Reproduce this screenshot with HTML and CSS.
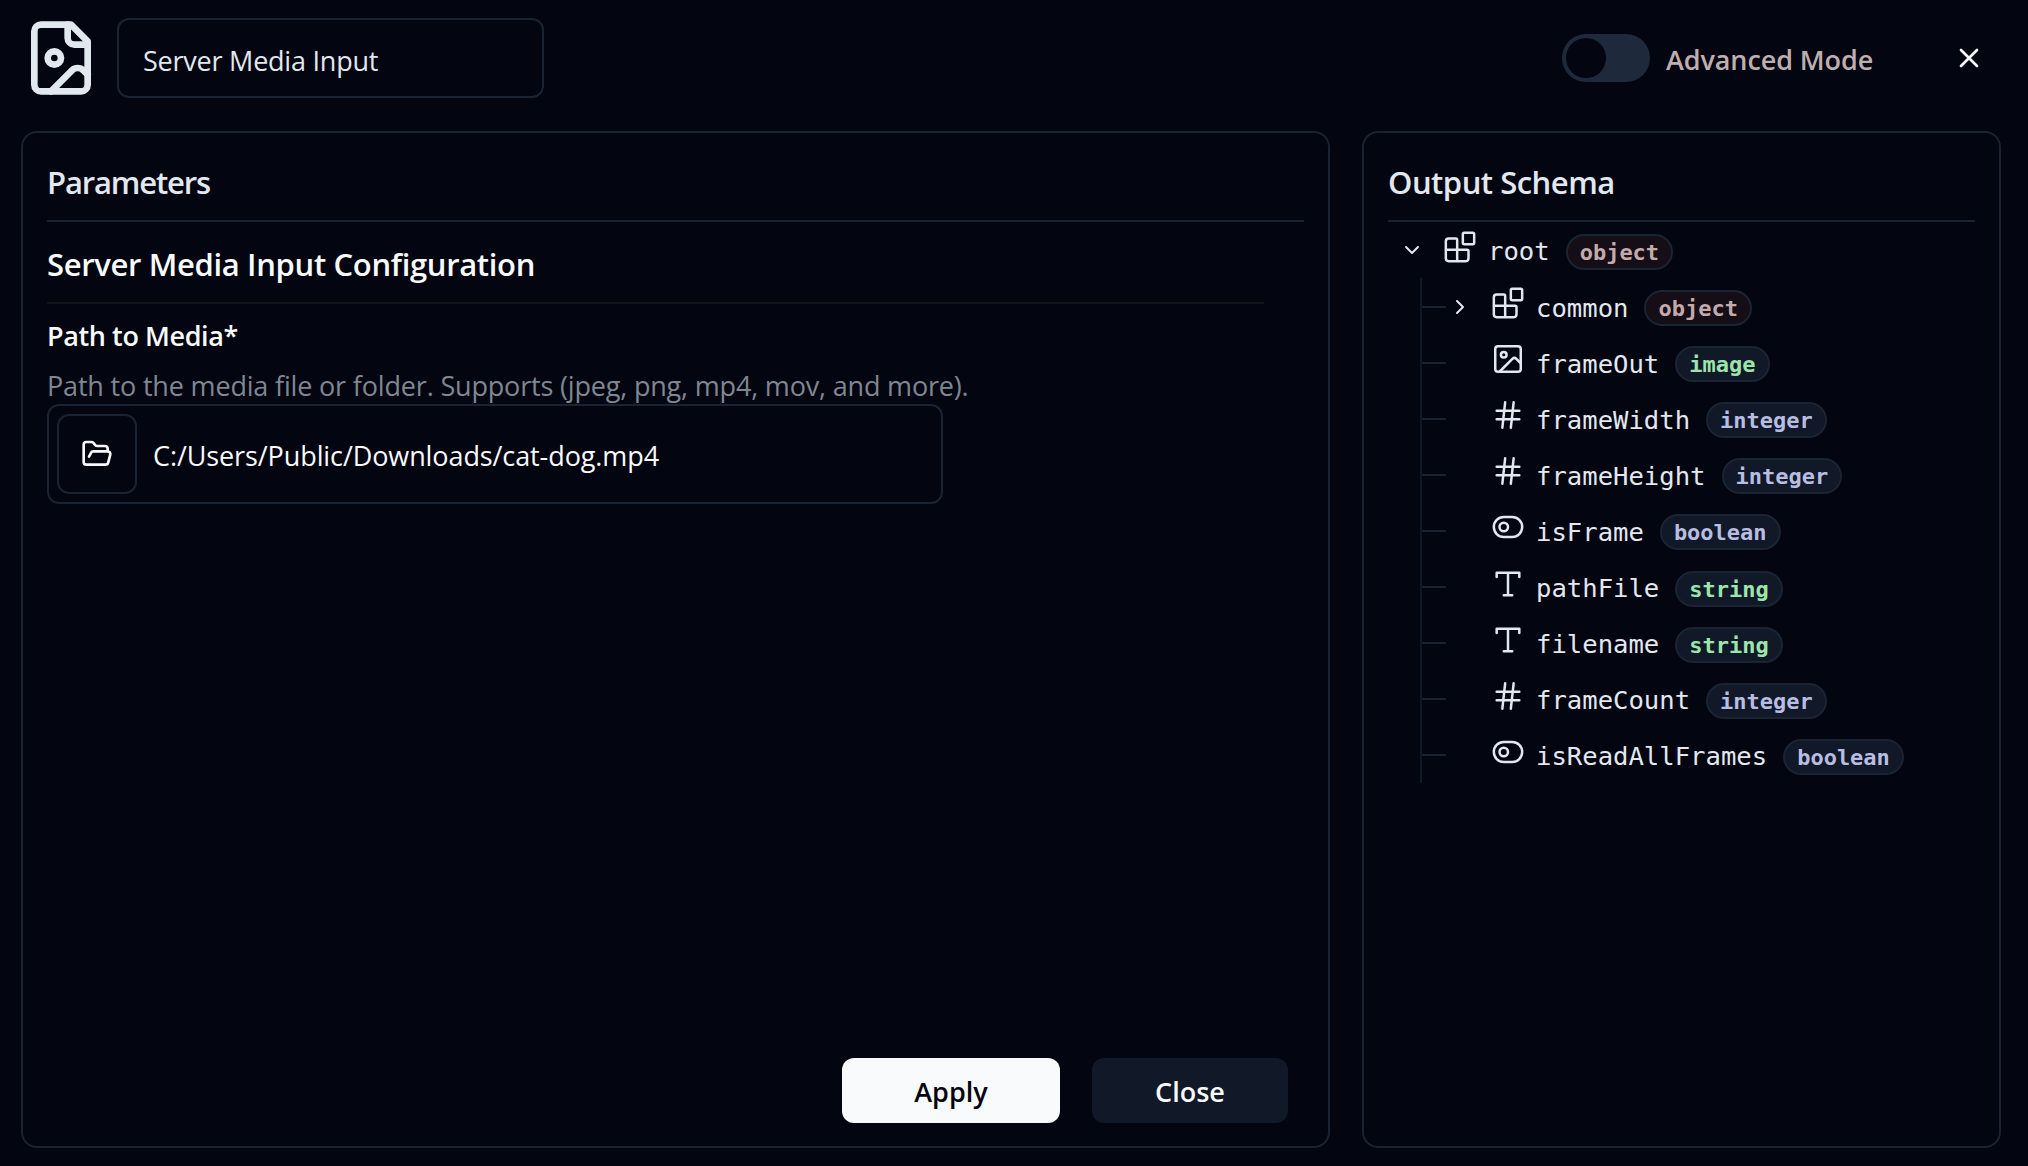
FILE: index.html
```html
<!DOCTYPE html>
<html lang="en">
<head>
  <meta charset="UTF-8" />
  <meta name="viewport" content="width=device-width, initial-scale=1.0"/>
  <title>Server Media Input</title>
  <link rel="stylesheet" href="styles.css">
</head>
<body>
  <!-- icon sprites -->
  <svg class="sprites">
    <symbol id="i-blocks" viewBox="0 0 24 24"><rect width="8" height="8" x="14" y="2" rx="1"/><path d="M10 22V7a1 1 0 0 0-1-1H4a2 2 0 0 0-2 2v12a2 2 0 0 0 2 2h12a2 2 0 0 0 2-2v-5a1 1 0 0 0-1-1H2"/></symbol>
    <symbol id="i-image" viewBox="0 0 24 24"><rect width="18" height="18" x="3" y="3" rx="2"/><circle cx="9" cy="9" r="2"/><path d="m21 15-3.086-3.086a2 2 0 0 0-2.828 0L6 21"/></symbol>
    <symbol id="i-hash" viewBox="0 0 24 24"><path d="M4 9h16M4 15h16M10 3 8 21M16 3l-2 18"/></symbol>
    <symbol id="i-toggle" viewBox="0 0 24 24"><rect width="20" height="14" x="2" y="5" rx="7"/><circle cx="9" cy="12" r="3"/></symbol>
    <symbol id="i-type" viewBox="0 0 24 24"><path d="M4 7V4h16v3M9 20h6M12 4v16"/></symbol>
  </svg>

  <div class="dialog">
    <header class="header">
      <svg class="node-icon" viewBox="0 0 24 24"><path d="M15 2H6a2 2 0 0 0-2 2v16a2 2 0 0 0 2 2h12a2 2 0 0 0 2-2V7Z"/><path d="M14 2v4a2 2 0 0 0 2 2h4"/><circle cx="10" cy="12" r="2"/><path d="m20 17-1.296-1.296a2.41 2.41 0 0 0-3.408 0L9 22"/></svg>
      <input class="name-input" type="text" value="Server Media Input" />
      <div class="mode">
        <button class="switch" role="switch" aria-checked="false"><span class="knob"></span></button>
        <span class="mode-label">Advanced Mode</span>
      </div>
      <button class="close-x" aria-label="Close">
        <svg viewBox="0 0 24 24"><path d="M18 6 6 18M6 6l12 12"/></svg>
      </button>
    </header>

    <main class="panels">
      <section class="panel params">
        <h2 class="panel-title">Parameters</h2>
        <div class="form">
          <h3 class="form-title">Server Media Input Configuration</h3>
          <label class="field-label">Path to Media*</label>
          <p class="field-help">Path to the media file or folder. Supports (jpeg, png, mp4, mov, and more).</p>
          <div class="path-field">
            <button class="browse" aria-label="Browse">
              <svg viewBox="0 0 24 24"><path d="m6 14 1.5-2.9A2 2 0 0 1 9.24 10H20a2 2 0 0 1 1.94 2.5l-1.54 6a2 2 0 0 1-1.95 1.5H4a2 2 0 0 1-2-2V5a2 2 0 0 1 2-2h3.9a2 2 0 0 1 1.69.9l.81 1.2a2 2 0 0 0 1.67.9H18a2 2 0 0 1 2 2v2"/></svg>
            </button>
            <span class="path-value">C:/Users/Public/Downloads/cat-dog.mp4</span>
          </div>
        </div>
        <div class="actions">
          <button class="btn btn-apply">Apply</button>
          <button class="btn btn-close">Close</button>
        </div>
      </section>

      <section class="panel schema">
        <h2 class="panel-title">Output Schema</h2>
        <div class="row root">
          <svg class="chevron" viewBox="0 0 24 24"><path d="m6 9 6 6 6-6"/></svg>
          <svg class="icon"><use href="#i-blocks"/></svg>
          <span class="key">root</span><span class="badge object">object</span>
        </div>
        <div class="children">
          <div class="row">
            <svg class="chevron" viewBox="0 0 24 24"><path d="m9 18 6-6-6-6"/></svg>
            <svg class="icon"><use href="#i-blocks"/></svg>
            <span class="key">common</span><span class="badge object">object</span>
          </div>
          <div class="row">
            <span class="chevron"></span>
            <svg class="icon"><use href="#i-image"/></svg>
            <span class="key">frameOut</span><span class="badge text">image</span>
          </div>
          <div class="row">
            <span class="chevron"></span>
            <svg class="icon"><use href="#i-hash"/></svg>
            <span class="key">frameWidth</span><span class="badge">integer</span>
          </div>
          <div class="row">
            <span class="chevron"></span>
            <svg class="icon"><use href="#i-hash"/></svg>
            <span class="key">frameHeight</span><span class="badge">integer</span>
          </div>
          <div class="row">
            <span class="chevron"></span>
            <svg class="icon"><use href="#i-toggle"/></svg>
            <span class="key">isFrame</span><span class="badge">boolean</span>
          </div>
          <div class="row">
            <span class="chevron"></span>
            <svg class="icon"><use href="#i-type"/></svg>
            <span class="key">pathFile</span><span class="badge text">string</span>
          </div>
          <div class="row">
            <span class="chevron"></span>
            <svg class="icon"><use href="#i-type"/></svg>
            <span class="key">filename</span><span class="badge text">string</span>
          </div>
          <div class="row">
            <span class="chevron"></span>
            <svg class="icon"><use href="#i-hash"/></svg>
            <span class="key">frameCount</span><span class="badge">integer</span>
          </div>
          <div class="row">
            <span class="chevron"></span>
            <svg class="icon"><use href="#i-toggle"/></svg>
            <span class="key">isReadAllFrames</span><span class="badge">boolean</span>
          </div>
        </div>
      </section>
    </main>
  </div>
</body>
</html>
```
FILE: styles.css
```css
* {
  box-sizing: border-box;
}

body {
  margin: 0;
  height: 100vh;
  overflow: hidden;
  background: #030510;
  color: #f8fafc;
  font-family: "Open Sans", "Noto Sans", sans-serif;
  font-size: 27px;
}

h2, h3, p {
  margin: 0;
}

button {
  padding: 0;
  border: none;
  background: none;
  color: inherit;
  font: inherit;
}

svg {
  display: block;
  flex-shrink: 0;
  fill: none;
  stroke: currentColor;
  stroke-width: 2;
  stroke-linecap: round;
  stroke-linejoin: round;
}

.sprites {
  display: none;
}

.dialog {
  display: flex;
  flex-direction: column;
  height: 100vh;
  padding: 18px 27px 18px 21px;
}

/* header */
.header {
  display: flex;
  align-items: center;
  height: 80px;
  margin-bottom: 33px;
}

.node-icon {
  width: 80px;
  height: 80px;
  color: #e2e8f0;
}

.name-input {
  width: 427px;
  height: 80px;
  margin-left: 16px;
  padding: 5px 24px 0;
  border: 2px solid #1a2333;
  border-radius: 12px;
  outline: none;
  background: transparent;
  color: #e2e8f0;
  font: inherit;
  letter-spacing: -0.23px;
}

.mode {
  display: flex;
  align-items: center;
  gap: 16px;
  margin-left: auto;
}

.switch {
  width: 88px;
  height: 48px;
  padding: 4px;
  border-radius: 24px;
  background: #1e293b;
}

.knob {
  display: block;
  width: 40px;
  height: 40px;
  border-radius: 50%;
  background: #030510;
}

.mode-label {
  width: 207px;
  padding-top: 3px;
  color: #bfaeb0;
  font-weight: 600;
  letter-spacing: -0.1px;
  white-space: nowrap;
}

.close-x {
  margin: 0 16px 0 80px;
}

.close-x svg {
  width: 32px;
  height: 32px;
}

/* panels */
.panels {
  flex: 1;
  display: grid;
  grid-template-columns: 1309px 1fr;
  gap: 32px;
}

.panel {
  display: flex;
  flex-direction: column;
  padding: 24px;
  border: 2px solid #1a2333;
  border-radius: 16px;
}

.panel-title {
  height: 65px;
  padding-top: 3px;
  border-bottom: 2px solid #1a2333;
  color: #e2e8f0;
  font-size: 31px;
  font-weight: 600;
  line-height: 44px;
  letter-spacing: -0.5px;
}

.params .panel-title {
  letter-spacing: -1.15px;
}

.form {
  flex: 1;
  padding-right: 40px;
}

.form-title {
  height: 82px;
  padding-top: 20px;
  border-bottom: 2px solid #14111b;
  font-size: 31px;
  font-weight: 600;
  line-height: 44px;
  letter-spacing: -0.34px;
}

.field-label {
  display: block;
  padding-top: 12px;
  font-weight: 600;
  line-height: 40px;
  letter-spacing: -0.4px;
}

.field-help {
  padding-top: 11px;
  height: 48px;
  color: #7f8793;
  line-height: 38px;
  letter-spacing: -0.175px;
  white-space: nowrap;
}

.path-field {
  display: flex;
  align-items: center;
  width: 896px;
  height: 100px;
  padding: 0 8px;
  border: 2px solid #1a2333;
  border-radius: 12px;
}

.browse {
  display: flex;
  align-items: center;
  justify-content: center;
  width: 80px;
  height: 80px;
  border: 2px solid #1a2333;
  border-radius: 12px;
}

.browse svg {
  width: 32px;
  height: 32px;
}

.path-value {
  padding: 3px 0 0 16px;
  letter-spacing: -0.1px;
}

.actions {
  display: flex;
  justify-content: flex-end;
  gap: 32px;
  padding-right: 16px;
  margin-bottom: -1px;
}

.btn {
  height: 65px;
  padding-top: 2px;
  border-radius: 12px;
  font-weight: 600;
}

.btn-apply {
  width: 218px;
  background: #f8fafc;
  color: #030510;
}

.btn-close {
  width: 196px;
  background: #111827;
}

/* schema tree */
.row {
  display: flex;
  align-items: center;
  height: 56.1px;
  color: #e2e8f0;
  font-family: "DejaVu Sans Mono", monospace;
  font-size: 25.6px;
}

.root {
  padding-left: 12px;
}

.chevron {
  width: 24px;
  height: 24px;
  margin-right: 19px;
}

.icon {
  width: 34px;
  height: 34px;
  margin: 0 11px 7px 0;
  stroke-width: 1.75;
}

.key {
  padding-top: 2px;
}

.badge {
  height: 36px;
  margin: 3px 0 0 16px;
  padding: 0 12px;
  border: 2px solid #1a2433;
  border-radius: 18px;
  background: #111827;
  color: #b8bde2;
  font-size: 22px;
  font-weight: 700;
  line-height: 33px;
}

.badge.text {
  color: #9ce6ab;
}

.badge.object {
  background: #150e17;
  color: #c4abab;
}

.children {
  margin: 0.4px 0 0 32px;
  border-left: 2px solid #111827;
}

/* branch line in front of every child */
.children .row::before {
  content: "";
  width: 24px;
  height: 2px;
  margin-right: 2px;
  background: #1a2333;
}
```
